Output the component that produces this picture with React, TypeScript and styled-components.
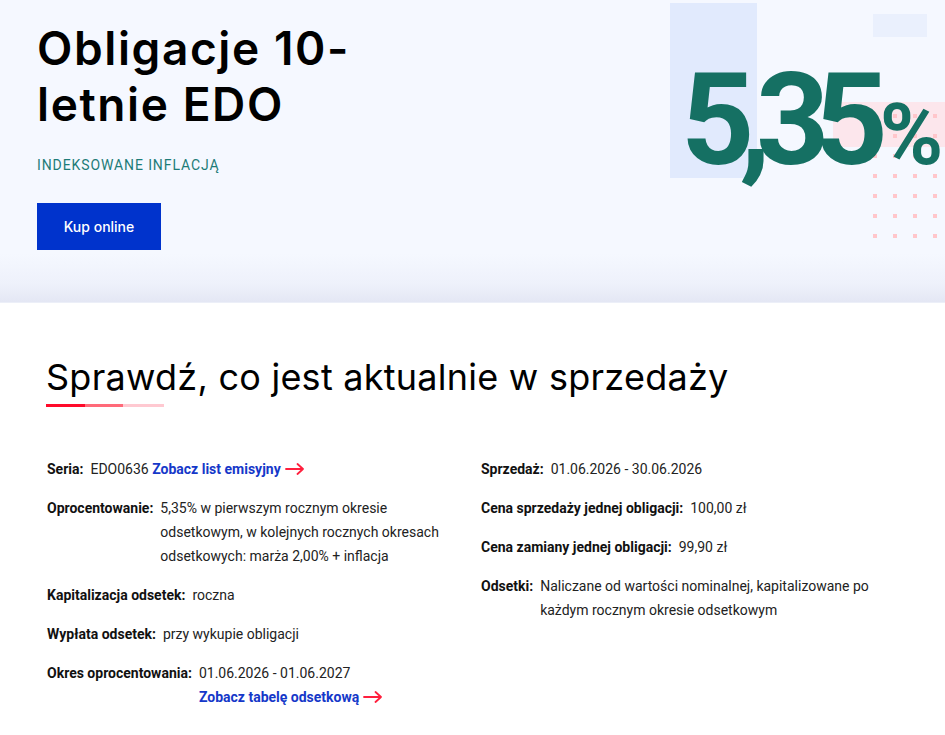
import React from "react";
import styled, { createGlobalStyle } from "styled-components";

const GlobalStyle = createGlobalStyle`
  html, body {
    margin: 0;
    padding: 0;
    background: #ffffff;
  }
  body {
    font-family: Roboto, "Liberation Sans", sans-serif;
    color: #1b1b1b;
  }
`;

const Page = styled.div`
  width: 945px;
  overflow: hidden;
`;

const Hero = styled.section`
  height: 303px;
  display: flex;
  justify-content: space-between;
  background: linear-gradient(to bottom, #f5f8ff 0%, #f5f8ff 84%, #eef1fb 94%, #e4e7f4 100%);
  border-bottom: 1px solid #eceff8;
  box-sizing: border-box;
`;

const HeroText = styled.div`
  padding: 20px 0 0 37px;
  width: 345px;
`;

const Title = styled.h1`
  margin: 0;
  font-family: Inter, "Noto Sans", sans-serif;
  font-weight: 600;
  font-size: 46px;
  line-height: 56px;
  letter-spacing: 1.6px;
  color: #000;
`;

const Subtitle = styled.div`
  margin-top: 25px;
  font-size: 14px;
  letter-spacing: 0.9px;
  color: #1d7c78;
`;

const BuyButton = styled.button`
  margin-top: 30px;
  width: 124px;
  height: 47px;
  border: 0;
  background: #0033cc;
  color: #fff;
  font-family: Inter, "Noto Sans", sans-serif;
  font-size: 14px;
  font-weight: 500;
  cursor: pointer;
`;

const RateArea = styled.div`
  position: relative;
  width: 275px;
  height: 100%;
`;

const Deco = styled.div<{ $x: number; $y: number; $w: number; $h: number; $c: string }>`
  position: absolute;
  left: ${(p) => p.$x}px;
  top: ${(p) => p.$y}px;
  width: ${(p) => p.$w}px;
  height: ${(p) => p.$h}px;
  background: ${(p) => p.$c};
`;

const Dots = styled.div`
  position: absolute;
  left: 203px;
  top: 114px;
  display: grid;
  grid-template-columns: repeat(4, 4px);
  grid-auto-rows: 4px;
  column-gap: 16px;
  row-gap: 16px;
`;

const Dot = styled.span`
  background: #ffc6cb;
`;

const Rate = styled.div`
  position: absolute;
  left: 11px;
  top: 56px;
  font-family: Roboto, "Liberation Sans", sans-serif;
  font-weight: 700;
  font-size: 128px;
  line-height: 1;
  letter-spacing: -15px;
  color: #157063;
  white-space: nowrap;
`;

const Percent = styled.span`
  font-size: 86px;
  letter-spacing: 0;
  margin-left: 7px;
`;

const Section = styled.section`
  padding: 52px 0 30px 46px;
`;

const Heading = styled.h2`
  margin: 0;
  font-family: Inter, "Noto Sans", sans-serif;
  font-weight: 400;
  font-size: 36px;
  line-height: 44px;
  letter-spacing: 0.25px;
  color: #000;
`;

const Underline = styled.div`
  margin-top: 5px;
  display: flex;
  height: 3px;
`;

const Seg = styled.span<{ $c: string; $w: number }>`
  width: ${(p) => p.$w}px;
  background: ${(p) => p.$c};
`;

const Details = styled.div`
  margin-top: 50px;
  display: grid;
  grid-template-columns: 434px 410px;
  padding-left: 1px;
`;

const Column = styled.div`
  display: flex;
  flex-direction: column;
  gap: 15px;
`;

const Row = styled.div`
  display: flex;
  font-size: 14px;
  line-height: 24px;
`;

const Label = styled.span`
  font-weight: 700;
  color: #111;
  flex-shrink: 0;
  margin-right: 7px;
`;

const Value = styled.span<{ $w?: number }>`
  color: #222;
  max-width: ${(p) => (p.$w ? `${p.$w}px` : "none")};
`;

const Link = styled.a`
  color: #1538c9;
  font-weight: 700;
  text-decoration: none;
  white-space: nowrap;
`;

const Arrow = () => (
  <svg width="20" height="12" viewBox="0 0 20 12" style={{ marginLeft: 4, verticalAlign: -1 }}>
    <path d="M1 6h17M12.5 1l5.5 5-5.5 5" fill="none" stroke="#ff1f3d" strokeWidth="1.8" strokeLinecap="round" strokeLinejoin="round" />
  </svg>
);

const left = [
  { label: "Kapitalizacja odsetek:", value: "roczna" },
  { label: "Wypłata odsetek:", value: "przy wykupie obligacji" },
];

const right = [
  { label: "Sprzedaż:", value: "01.06.2026 - 30.06.2026" },
  { label: "Cena sprzedaży jednej obligacji:", value: "100,00 zł" },
  { label: "Cena zamiany jednej obligacji:", value: "99,90 zł" },
];

export default function App() {
  return (
    <Page>
      <GlobalStyle />
      <Hero>
        <HeroText>
          <Title>Obligacje 10-letnie EDO</Title>
          <Subtitle>INDEKSOWANE INFLACJĄ</Subtitle>
          <BuyButton>Kup online</BuyButton>
        </HeroText>
        <RateArea>
          <Deco $x={0} $y={3} $w={87} $h={175} $c="#e1eafd" />
          <Deco $x={203} $y={14} $w={54} $h={23} $c="#eaf0fd" />
          <Deco $x={163} $y={102} $w={112} $h={45} $c="#fce6ec" />
          <Dots>
            {Array.from({ length: 28 }).map((_, i) => (
              <Dot key={i} />
            ))}
          </Dots>
          <Rate>
            5,35<Percent>%</Percent>
          </Rate>
        </RateArea>
      </Hero>
      <Section>
        <Heading>Sprawdź, co jest aktualnie w sprzedaży</Heading>
        <Underline>
          <Seg $c="#ff0a2a" $w={39} />
          <Seg $c="#ff6a79" $w={38} />
          <Seg $c="#ffc9d1" $w={41} />
        </Underline>
        <Details>
          <Column>
            <Row>
              <Label>Seria:</Label>
              <Value>
                EDO0636 <Link href="#">Zobacz list emisyjny<Arrow /></Link>
              </Value>
            </Row>
            <Row>
              <Label>Oprocentowanie:</Label>
              <Value $w={280}>
                5,35% w pierwszym rocznym okresie odsetkowym, w kolejnych rocznych okresach odsetkowych: marża 2,00% + inflacja
              </Value>
            </Row>
            {left.map((r) => (
              <Row key={r.label}>
                <Label>{r.label}</Label>
                <Value>{r.value}</Value>
              </Row>
            ))}
            <Row>
              <Label>Okres oprocentowania:</Label>
              <Value>
                01.06.2026 - 01.06.2027
                <br />
                <Link href="#">Zobacz tabelę odsetkową<Arrow /></Link>
              </Value>
            </Row>
          </Column>
          <Column>
            {right.map((r) => (
              <Row key={r.label}>
                <Label>{r.label}</Label>
                <Value>{r.value}</Value>
              </Row>
            ))}
            <Row>
              <Label>Odsetki:</Label>
              <Value $w={330}>Naliczane od wartości nominalnej, kapitalizowane po każdym rocznym okresie odsetkowym</Value>
            </Row>
          </Column>
        </Details>
      </Section>
    </Page>
  );
}
